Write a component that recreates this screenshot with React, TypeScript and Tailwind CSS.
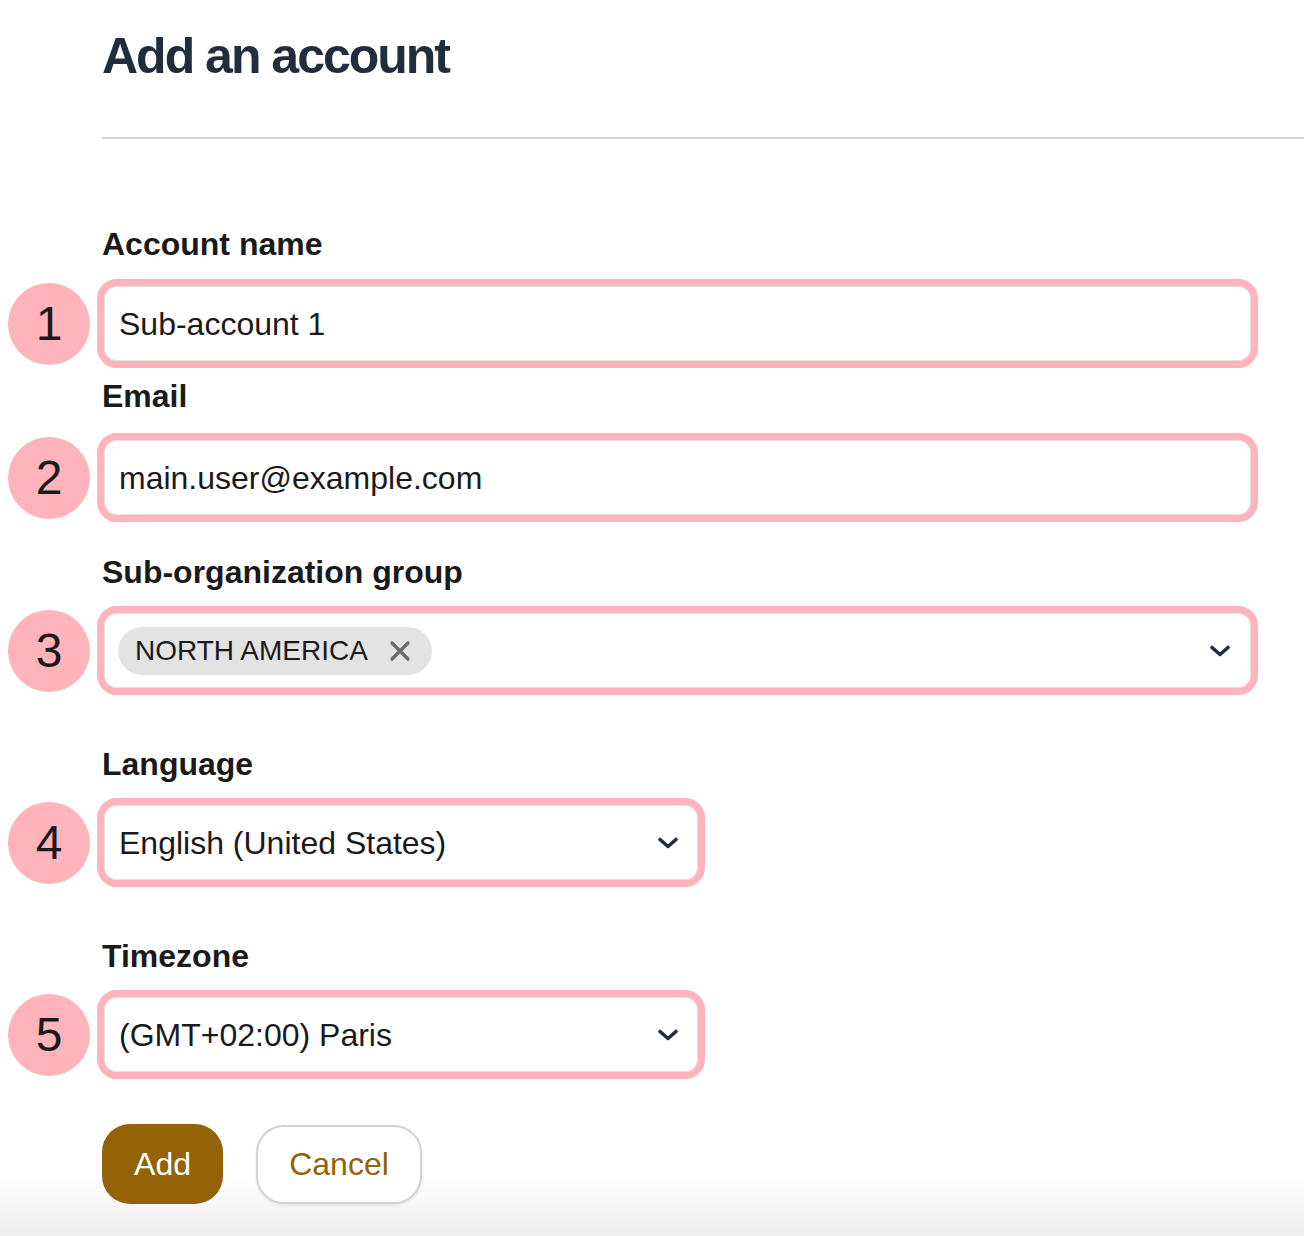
import React from "react";

const font = { fontFamily: '"Liberation Sans", Arial, Helvetica, sans-serif' };

function Chevron() {
  return (
    <svg width="22" height="14" viewBox="0 0 22 14" fill="none" className="shrink-0">
      <path d="M3 3.5 L11 10.5 L19 3.5" stroke="#1f2d3d" strokeWidth="3.6" strokeLinecap="round" strokeLinejoin="round" />
    </svg>
  );
}

function Badge({ n }: { n: number }) {
  return (
    <div className="flex h-[82px] w-[82px] shrink-0 items-center justify-center rounded-full bg-[#ffb3bb] text-[48px] leading-none text-[#1a1a1a]">
      {n}
    </div>
  );
}

function Label({ children, className }: { children: React.ReactNode; className: string }) {
  return (
    <div className={`ml-[94px] text-[32px] font-bold leading-[36px] text-[#1a1a1a] ${className}`}>{children}</div>
  );
}

function Field({
  n,
  width,
  className,
  children,
}: {
  n: number;
  width: string;
  className: string;
  children: React.ReactNode;
}) {
  return (
    <div className={`flex items-center gap-[7px] ${className}`}>
      <Badge n={n} />
      <div
        className={`flex h-[89px] items-center rounded-[20px] border-[7px] border-[#ffb3bb] bg-white shadow-[inset_0_0_0_1px_#e2e2e2] ${width}`}
      >
        {children}
      </div>
    </div>
  );
}

export default function App() {
  return (
    <div
      style={font}
      className="min-h-[1236px] w-full overflow-hidden bg-linear-to-b from-white from-[95%] to-[#efefef] pl-[8px]"
    >
      <h1 className="ml-[94px] pt-[31px] text-[50px] font-bold leading-[50px] tracking-[-2px] text-[#1f2d3d]">
        Add an account
      </h1>
      <div className="ml-[94px] mt-[56px] h-[2px] bg-[#d3d3d3]" />

      <Label className="mt-[87px]">Account name</Label>
      <Field n={1} width="w-[1161px]" className="mt-[17px]">
        <span className="pl-[15px] text-[32px] leading-none text-[#1a1a1a]">Sub-account 1</span>
      </Field>

      <Label className="mt-[10px]">Email</Label>
      <Field n={2} width="w-[1161px]" className="mt-[19px]">
        <span className="pl-[15px] text-[32px] leading-none text-[#1a1a1a]">main.user@example.com</span>
      </Field>

      <Label className="mt-[32px]">Sub-organization group</Label>
      <Field n={3} width="w-[1161px]" className="mt-[16px]">
        <div className="flex w-full items-center justify-between pl-[14px] pr-[20px]">
          <div className="flex h-[48px] items-center gap-[21px] rounded-full bg-[#e3e3e3] pl-[17px] pr-[21px]">
            <span className="text-[28px] leading-none text-[#1a1a1a]">NORTH AMERICA</span>
            <svg width="22" height="22" viewBox="0 0 22 22" fill="none">
              <path d="M3 3 L19 19 M19 3 L3 19" stroke="#6b6b6b" strokeWidth="3.4" strokeLinecap="round" />
            </svg>
          </div>
          <Chevron />
        </div>
      </Field>

      <Label className="mt-[51px]">Language</Label>
      <Field n={4} width="w-[608px]" className="mt-[16px]">
        <div className="flex w-full items-center justify-between pl-[15px] pr-[19px]">
          <span className="text-[32px] leading-none text-[#1a1a1a]">English (United States)</span>
          <Chevron />
        </div>
      </Field>

      <Label className="mt-[51px]">Timezone</Label>
      <Field n={5} width="w-[608px]" className="mt-[16px]">
        <div className="flex w-full items-center justify-between pl-[15px] pr-[19px]">
          <span className="text-[32px] leading-none text-[#1a1a1a]">(GMT+02:00) Paris</span>
          <Chevron />
        </div>
      </Field>

      <div className="ml-[94px] mt-[45px] flex items-center gap-[33px]">
        <button className="h-[80px] w-[121px] rounded-[28px] bg-[#946207] text-[32px] leading-none text-white">
          Add
        </button>
        <button className="h-[79px] w-[166px] rounded-[28px] border-2 border-[#d2d2d2] bg-white text-[32px] leading-none text-[#946207] shadow-[0_2px_3px_rgba(0,0,0,0.08)]">
          Cancel
        </button>
      </div>
    </div>
  );
}
